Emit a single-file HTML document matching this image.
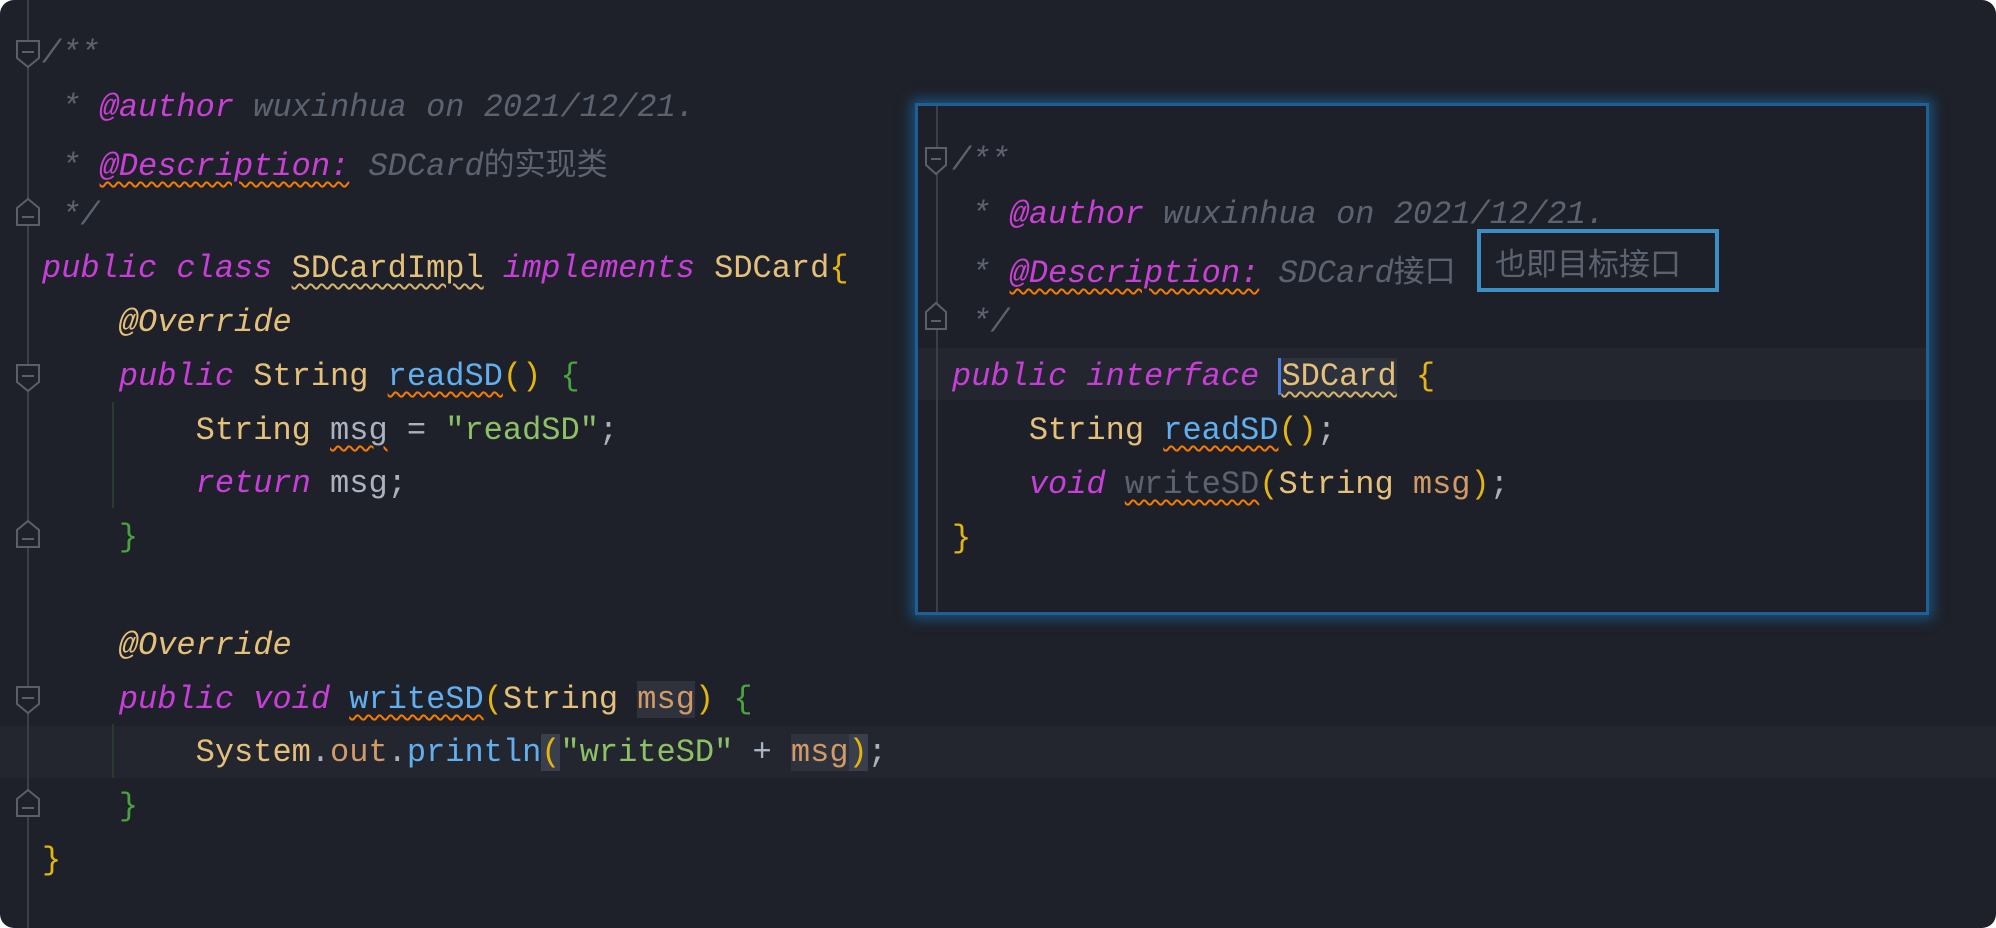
<!DOCTYPE html>
<html><head><meta charset="utf-8"><style>
html,body{margin:0;padding:0;background:#fff;}
#pg{position:relative;width:1996px;height:928px;background:#1e2129;border-radius:14px;overflow:hidden;font-family:"Liberation Mono","Noto Sans CJK SC",monospace;font-size:32px;}
.l{position:absolute;left:0;height:54px;line-height:54px;white-space:pre;color:#abb2bf;}
.i{font-style:italic}
.cm{color:#5c6370;font-style:italic}
.cj{color:#5c6370;font-style:normal;font-family:"Noto Sans CJK SC",sans-serif;font-size:31px}
.tg{color:#c940d4;font-style:italic}
.kw{color:#c73fd8;font-style:italic}
.ty{color:#e5c07b}
.fn{color:#61afef}
.st{color:#8cc265}
.br{color:#e5b50f}
.gb{color:#4aa33f}
.fd{color:#d19a66}
.gy{color:#5c6370}
.w{text-decoration:underline wavy #f57c00;text-decoration-thickness:2px;text-underline-offset:6px}
.wy{text-decoration:underline wavy #d6b46a;text-decoration-thickness:2px;text-underline-offset:6px}
.hb{background:#2e323c}
.hb2{background:#3a3f4d}
.gut{position:absolute;left:27px;top:0;width:2px;height:928px;background:#3b3f47}
.hl{position:absolute;left:0;width:1996px;height:52px;background:#23262f}
#pop{position:absolute;left:915px;top:103px;width:1014px;height:512px;background:#1e2029;border:3px solid #1e5f94;box-sizing:border-box;box-shadow:0 0 12px 4px #1b4f7d;overflow:hidden}
</style></head><body><div id="pg">
<div class="hl" style="top:726px"></div>
<div class="gut"></div>
<div style="position:absolute;left:112px;top:402px;width:2px;height:106px;background:#2a3a2c"></div>
<div style="position:absolute;left:112px;top:724px;width:2px;height:54px;background:#2a3a2c"></div>
<svg style="position:absolute;left:0;top:0" width="60" height="928">
<g fill="#1e2129" stroke="#5a5f69" stroke-width="2">
<path d="M17 41h22v17l-11 9l-11-9z"/><path d="M17 225h22v-17l-11-9l-11 9z"/>
<path d="M17 365h22v17l-11 9l-11-9z"/><path d="M17 547h22v-17l-11-9l-11 9z"/>
<path d="M17 687h22v17l-11 9l-11-9z"/><path d="M17 816h22v-17l-11-9l-11 9z"/>
</g><g stroke="#5a5f69" stroke-width="2"><path d="M22 52h12M22 217h12M22 376h12M22 539h12M22 698h12M22 808h12"/></g></svg>
<div style="position:absolute;left:42px;top:2px">
<div class="l" style="top:25px"><span class="cm">/**</span></div>
<div class="l" style="top:79px"><span class="cm"> * </span><span class="tg">@author</span><span class="cm"> wuxinhua on 2021/12/21.</span></div>
<div class="l" style="top:133px"><span class="cm"> * </span><span class="tg w">@Description:</span><span class="cm"> SDCard</span><span class="cj">的实现类</span></div>
<div class="l" style="top:187px"><span class="cm"> */</span></div>
<div class="l" style="top:240px"><span class="kw">public class </span><span class="ty wy">SDCardImpl</span><span class="kw"> implements </span><span class="ty">SDCard</span><span class="br">{</span></div>
<div class="l" style="top:294px"><span class="ty i">    @Override</span></div>
<div class="l" style="top:348px">    <span class="kw">public </span><span class="ty">String </span><span class="fn w">readSD</span><span class="br">()</span> <span class="gb">{</span></div>
<div class="l" style="top:402px">        <span class="ty">String </span><span class="w">msg</span> = <span class="st">"readSD"</span>;</div>
<div class="l" style="top:455px">        <span class="kw">return</span> msg;</div>
<div class="l" style="top:509px">    <span class="gb">}</span></div>
<div class="l" style="top:617px"><span class="ty i">    @Override</span></div>
<div class="l" style="top:671px">    <span class="kw">public void </span><span class="fn w">writeSD</span><span class="br">(</span><span class="ty">String </span><span class="fd hb">msg</span><span class="br">)</span> <span class="gb">{</span></div>
<div class="l" style="top:724px">        <span class="ty">System</span>.<span class="fd">out</span>.<span class="fn">println</span><span class="br hb2">(</span><span class="st">"writeSD"</span> + <span class="fd hb">msg</span><span class="br hb2">)</span>;</div>
<div class="l" style="top:778px">    <span class="gb">}</span></div>
<div class="l" style="top:832px"><span class="br">}</span></div>
</div>
<div id="pop">
<div style="position:absolute;left:-3px;top:242px;width:1020px;height:52px;background:#23262f"></div>
<div style="position:absolute;left:18px;top:0;width:2px;height:512px;background:#3b3f47"></div>
<svg style="position:absolute;left:0;top:0" width="40" height="300">
<g fill="#1e2029" stroke="#5a5f69" stroke-width="2"><path d="M8 42h20v17l-10 9l-10-9z"/><path d="M8 223h20v-17l-10-9l-10 9z"/></g>
<g stroke="#5a5f69" stroke-width="2"><path d="M13 53h10M13 215h10"/></g></svg>
<div style="position:absolute;left:34px;top:-103px">
<div class="l" style="top:131px"><span class="cm">/**</span></div>
<div class="l" style="top:185px"><span class="cm"> * </span><span class="tg">@author</span><span class="cm"> wuxinhua on 2021/12/21.</span></div>
<div class="l" style="top:239px"><span class="cm"> * </span><span class="tg w">@Description:</span><span class="cm"> SDCard</span><span class="cj">接口</span></div>
<div class="l" style="top:293px"><span class="cm"> */</span></div>
<div class="l" style="top:347px"><span class="kw">public interface </span><span class="ty wy hb" style="border-left:3px solid #4a7fe0">SDCard</span> <span class="br">{</span></div>
<div class="l" style="top:401px">    <span class="ty">String </span><span class="fn w">readSD</span><span class="br">()</span>;</div>
<div class="l" style="top:455px">    <span class="kw">void </span><span class="gy w">writeSD</span><span class="br">(</span><span class="ty">String </span><span class="fd">msg</span><span class="br">)</span>;</div>
<div class="l" style="top:509px"><span class="br">}</span></div>
</div>
<div style="position:absolute;left:559px;top:123px;width:242px;height:63px;border:4px solid #3b8fc4;box-sizing:border-box;color:#5c6370;font-family:'Noto Sans CJK SC',sans-serif;font-size:31px;line-height:58px;padding-left:14px">也即目标接口</div>
</div>
</div></body></html>
